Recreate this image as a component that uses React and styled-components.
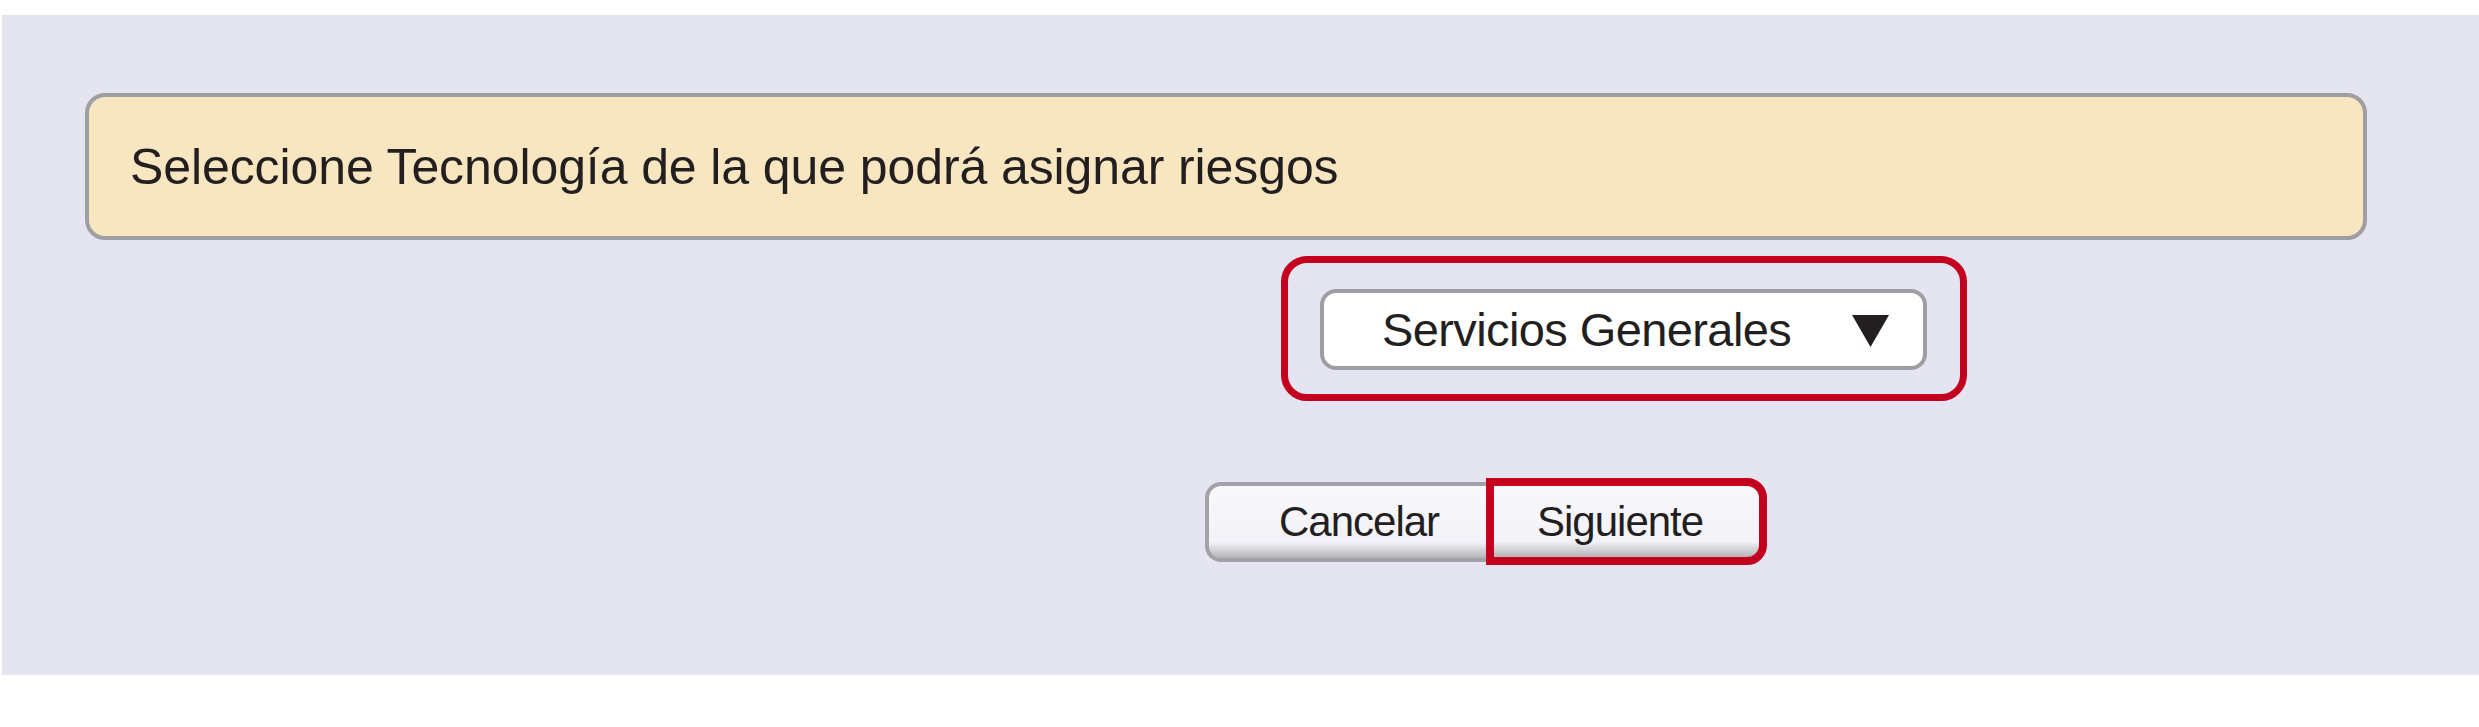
import React from 'react';
import styled, { createGlobalStyle } from 'styled-components';

const GlobalStyle = createGlobalStyle`
  body {
    margin: 0;
    background: #ffffff;
    font-family: "Liberation Sans", Arial, sans-serif;
    color: #231f20;
  }
`;

const Page = styled.div`
  padding: 15px 0 0 2px;
`;

const Panel = styled.section`
  box-sizing: border-box;
  height: 660px;
  padding: 78px 112px 0 83px;
  background: #e5e4f1;
  display: flex;
  flex-direction: column;
`;

const Banner = styled.div`
  box-sizing: border-box;
  height: 147px;
  border: 4px solid #9e9fa2;
  border-radius: 20px;
  background: #f7e6bf;
  display: flex;
  align-items: center;
  padding-left: 41px;
  font-size: 50px;
  letter-spacing: -0.1px;
`;

const Highlight = styled.div`
  box-sizing: border-box;
  align-self: flex-start;
  margin: 16px 0 0 1196px;
  width: 686px;
  border: 7px solid #c4001f;
  border-radius: 26px;
  padding: 26px 33px 24px 32px;
`;

const Select = styled.div`
  box-sizing: border-box;
  height: 81px;
  border: 4px solid #9e9fa2;
  border-radius: 16px;
  background: #ffffff;
  display: flex;
  align-items: center;
  justify-content: space-between;
  padding: 0 34px 0 58px;
  font-size: 47px;
  letter-spacing: -0.6px;
  cursor: pointer;
`;

const Arrow = styled.svg`
  display: block;
  margin-top: 3px;
`;

const ButtonGroup = styled.div`
  display: flex;
  align-items: center;
  align-self: flex-start;
  margin: 77px 0 0 1120px;
`;

const ActionButton = styled.button`
  box-sizing: border-box;
  width: 281px;
  height: ${p => (p.$highlight ? '87px' : '80px')};
  padding: 0 0 0 ${p => (p.$highlight ? '43px' : '70px')};
  border: ${p => (p.$highlight ? '8px solid #c4001f' : '4px solid #a3a3a7')};
  border-right-width: ${p => (p.$highlight ? '8px' : '0')};
  border-radius: ${p => (p.$highlight ? '0 20px 20px 0' : '16px 0 0 16px')};
  background: linear-gradient(
    to bottom,
    #f8f7fc 0%,
    #f3f2f8 78%,
    #d6d5db 88%,
    #b3b3b8 100%
  );
  font-family: inherit;
  font-size: 42px;
  letter-spacing: -1px;
  color: #231f20;
  text-align: left;
  cursor: pointer;
`;

function App() {
  return (
    <Page>
      <GlobalStyle />
      <Panel>
        <Banner>Seleccione Tecnología de la que podrá asignar riesgos</Banner>
        <Highlight>
          <Select>
            <span>Servicios Generales</span>
            <Arrow width="37" height="32" viewBox="0 0 37 32">
              <polygon points="0,0 37,0 18.5,32" fill="#231f20" />
            </Arrow>
          </Select>
        </Highlight>
        <ButtonGroup>
          <ActionButton>Cancelar</ActionButton>
          <ActionButton $highlight>Siguiente</ActionButton>
        </ButtonGroup>
      </Panel>
    </Page>
  );
}

export default App;
